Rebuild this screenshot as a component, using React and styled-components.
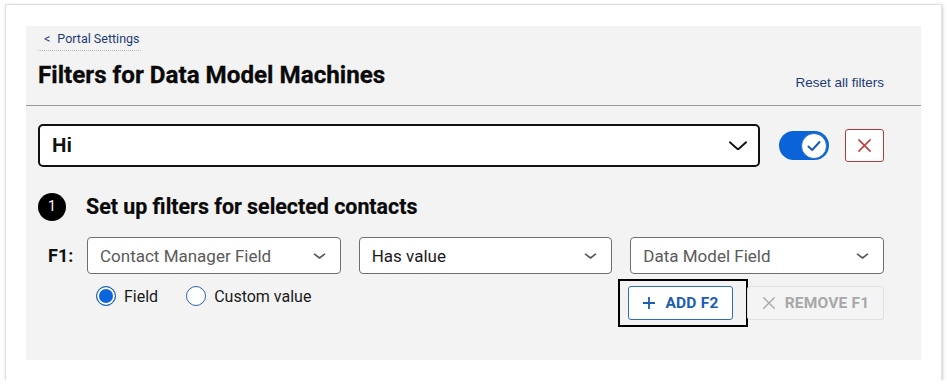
import React from 'react';
import styled, { createGlobalStyle } from 'styled-components';

const Global = createGlobalStyle`
  html, body { margin: 0; padding: 0; background: #fff; }
  body { font-family: Roboto, "Liberation Sans", Arial, sans-serif; color: #111; }
  * { box-sizing: border-box; }
`;

const Card = styled.div`
  margin: 5px 0 0 6px;
  width: 935px;
  height: 375px;
  background: #fff;
  box-shadow: 0 0 0 1px #e0e0e0, 1px 1px 4px rgba(0, 0, 0, 0.3);
  padding: 21px 20px 20px 20px;
`;

const Panel = styled.section`
  background: #f3f3f3;
  height: 334px;
`;

const Header = styled.header`
  height: 80px;
  display: flex;
  justify-content: space-between;
  align-items: flex-end;
  padding: 5px 37px 0 12px;
  border-bottom: 1px solid #9b9b9b;
`;

const TitleBlock = styled.div`
  align-self: flex-start;
  display: flex;
  flex-direction: column;
  align-items: flex-start;
`;

const Breadcrumb = styled.a`
  display: flex;
  gap: 7px;
  font-size: 12.5px;
  line-height: 16px;
  color: #1d3b73;
  padding: 0 1px 3px 6px;
  border-bottom: 1px dotted #bdbdbd;
  text-decoration: none;
`;

const Title = styled.h1`
  margin: 10px 0 0 0;
  font-size: 24.2px;
  line-height: 28px;
  font-weight: 700;
  color: #0a0a0a;
  -webkit-text-stroke: 0.3px #0a0a0a;
`;

const ResetLink = styled.a`
  font-family: "Liberation Sans", Arial, sans-serif;
  font-size: 13.5px;
  line-height: 16px;
  color: #1d3b73;
  padding-bottom: 14px;
  text-decoration: none;
`;

const Body = styled.div`
  padding: 18px 37px 0 12px;
`;

const MainRow = styled.div`
  display: flex;
  align-items: center;
`;

const BigSelect = styled.div`
  width: 722px;
  height: 43px;
  border: 2px solid #111;
  border-radius: 5px;
  background: #fff;
  display: flex;
  align-items: center;
  justify-content: space-between;
  padding: 0 11px 0 12px;
  font-family: "Liberation Sans", Arial, sans-serif;
  font-weight: 700;
  font-size: 20px;
  color: #111;
`;

const Toggle = styled.div`
  margin-left: 19px;
  width: 50px;
  height: 29px;
  border-radius: 15px;
  background: #0b63d8;
  display: flex;
  align-items: center;
  justify-content: flex-end;
  padding-right: 2px;
`;

const Knob = styled.div`
  width: 26px;
  height: 26px;
  border-radius: 50%;
  background: #fff;
  border: 1px solid #2a6fc7;
  display: flex;
  align-items: center;
  justify-content: center;
`;

const DeleteButton = styled.button`
  margin-left: 16px;
  width: 39px;
  height: 33px;
  border: 1px solid #b8393b;
  border-radius: 3px;
  background: #fff;
  display: flex;
  align-items: center;
  justify-content: center;
  padding: 0;
`;

const StepRow = styled.div`
  margin-top: 26px;
  display: flex;
  align-items: center;
`;

const StepBadge = styled.div`
  width: 28px;
  height: 28px;
  border-radius: 50%;
  background: #000;
  color: #fff;
  font-size: 14px;
  display: flex;
  align-items: center;
  justify-content: center;
  padding-bottom: 2px;
`;

const StepTitle = styled.h2`
  margin: 0 0 0 20px;
  font-size: 21.4px;
  line-height: 24px;
  font-weight: 700;
  color: #0a0a0a;
  -webkit-text-stroke: 0.2px #0a0a0a;
`;

const FilterRow = styled.div`
  margin-top: 16px;
  display: flex;
  align-items: center;
`;

const FilterLabel = styled.div`
  width: 49px;
  padding-left: 10px;
  font-size: 18px;
  font-weight: 700;
  color: #111;
`;

const SelectGrid = styled.div`
  flex: 1;
  display: grid;
  grid-template-columns: 1fr 1fr 1fr;
  gap: 18px;
`;

const SmallSelect = styled.div`
  height: 37px;
  border: 1px solid #6e6e6e;
  border-radius: 4px;
  background: #fff;
  display: flex;
  align-items: center;
  justify-content: space-between;
  padding: 0 14px 0 12px;
  font-size: 17px;
  color: ${(p) => (p.$placeholder ? '#5a5a5a' : '#1a1a1a')};
`;

const ActionRow = styled.div`
  margin-top: 5px;
  display: flex;
  justify-content: space-between;
  align-items: flex-start;
  padding-left: 58px;
`;

const RadioGroup = styled.div`
  padding-top: 7px;
  display: flex;
  align-items: center;
  gap: 28px;
`;

const RadioOption = styled.label`
  display: flex;
  align-items: center;
  gap: 8px;
  font-size: 16px;
  color: #1a1a1a;
`;

const RadioDot = styled.span`
  width: 20px;
  height: 20px;
  border-radius: 50%;
  border: 1.5px solid ${(p) => (p.$checked ? '#1a5cb0' : '#2c62ad')};
  background: ${(p) => (p.$checked ? '#0a64dc' : '#fff')};
  box-shadow: ${(p) => (p.$checked ? 'inset 0 0 0 2px #fff' : 'none')};
`;

const ButtonGroup = styled.div`
  display: flex;
  align-items: flex-start;
`;

const FocusRing = styled.div`
  border: 2px solid #000;
  padding: 5px 13px 5px 8px;
`;

const ActionButton = styled.button`
  height: 34px;
  width: ${(p) => p.$w}px;
  border-radius: 3px;
  border: 1px solid ${(p) => (p.$disabled ? '#e0e0e0' : '#2f6db8')};
  background: ${(p) => (p.$disabled ? '#f4f4f4' : '#fff')};
  color: ${(p) => (p.$disabled ? '#a8a8a8' : '#1b5db2')};
  font-family: Roboto, "Liberation Sans", Arial, sans-serif;
  font-weight: 700;
  font-size: 15.5px;
  letter-spacing: 0.2px;
  display: flex;
  align-items: center;
  justify-content: center;
  gap: 9px;
  padding: 0;
  margin-top: ${(p) => (p.$disabled ? '7px' : '0')};
  margin-left: ${(p) => (p.$disabled ? '-1px' : '0')};
`;

const Chevron = ({ size = 18, color = '#111', stroke = 2 }) => (
  <svg width={size} height={size * 0.55} viewBox="0 0 18 10" fill="none">
    <path d="M1 1.5 L9 8.5 L17 1.5" stroke={color} strokeWidth={stroke} strokeLinecap="square" />
  </svg>
);

const SmallChevron = () => (
  <svg width="13" height="8" viewBox="0 0 13 8" fill="none">
    <path d="M1.5 2.2 L6.5 6 L11.5 2.2" stroke="#555" strokeWidth="1.6" strokeLinecap="round" strokeLinejoin="round" />
  </svg>
);

const Check = () => (
  <svg width="14" height="12" viewBox="0 0 14 12" fill="none">
    <path d="M1.5 6.5 L5.2 10 L12.5 2" stroke="#1a5cb0" strokeWidth="2" strokeLinecap="round" strokeLinejoin="round" />
  </svg>
);

const Cross = ({ size, color, stroke }) => (
  <svg width={size} height={size} viewBox="0 0 16 16" fill="none">
    <path d="M2 2 L14 14 M14 2 L2 14" stroke={color} strokeWidth={stroke} strokeLinecap="round" />
  </svg>
);

const PlusIcon = () => (
  <svg width="14" height="14" viewBox="0 0 14 14" fill="none">
    <path d="M7 1 V13 M1 7 H13" stroke="#1b5db2" strokeWidth="1.8" />
  </svg>
);

export default function App() {
  return (
    <>
      <Global />
      <Card>
        <Panel>
          <Header>
            <TitleBlock>
              <Breadcrumb href="#">
                <span>&lt;</span>
                <span>Portal Settings</span>
              </Breadcrumb>
              <Title>Filters for Data Model Machines</Title>
            </TitleBlock>
            <ResetLink href="#">Reset all filters</ResetLink>
          </Header>
          <Body>
            <MainRow>
              <BigSelect>
                <span>Hi</span>
                <Chevron />
              </BigSelect>
              <Toggle>
                <Knob>
                  <Check />
                </Knob>
              </Toggle>
              <DeleteButton aria-label="Delete">
                <Cross size={15} color="#c0393b" stroke={1.6} />
              </DeleteButton>
            </MainRow>
            <StepRow>
              <StepBadge>1</StepBadge>
              <StepTitle>Set up filters for selected contacts</StepTitle>
            </StepRow>
            <FilterRow>
              <FilterLabel>F1:</FilterLabel>
              <SelectGrid>
                <SmallSelect $placeholder>
                  <span>Contact Manager Field</span>
                  <SmallChevron />
                </SmallSelect>
                <SmallSelect>
                  <span>Has value</span>
                  <SmallChevron />
                </SmallSelect>
                <SmallSelect $placeholder>
                  <span>Data Model Field</span>
                  <SmallChevron />
                </SmallSelect>
              </SelectGrid>
            </FilterRow>
            <ActionRow>
              <RadioGroup>
                <RadioOption>
                  <RadioDot $checked />
                  Field
                </RadioOption>
                <RadioOption>
                  <RadioDot />
                  Custom value
                </RadioOption>
              </RadioGroup>
              <ButtonGroup>
                <FocusRing>
                  <ActionButton $w={105}>
                    <PlusIcon />
                    ADD F2
                  </ActionButton>
                </FocusRing>
                <ActionButton $w={137} $disabled>
                  <Cross size={14} color="#a8a8a8" stroke={1.6} />
                  REMOVE F1
                </ActionButton>
              </ButtonGroup>
            </ActionRow>
          </Body>
        </Panel>
      </Card>
    </>
  );
}
